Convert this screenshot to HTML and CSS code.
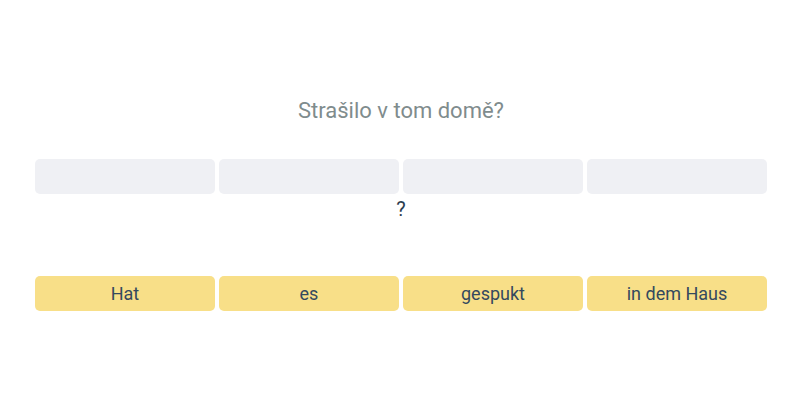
FILE: index.html
```html
<!DOCTYPE html>
<html lang="en">

<head>
    <meta charset="UTF-8">
    <meta name="viewport" content="width=device-width, initial-scale=1.0">
    <title>Sentence Builder</title>
    <link rel="stylesheet" href="styles.css">
</head>

<body>
    <div class="exercise">
        <h2 class="prompt">Strašilo v tom domě?</h2>

        <div class="answer">
            <div class="slot"></div>
            <div class="slot"></div>
            <div class="slot"></div>
            <div class="slot"></div>
        </div>
        <div class="punct">?</div>

        <div class="bank">
            <button class="chip">Hat</button>
            <button class="chip">es</button>
            <button class="chip">gespukt</button>
            <button class="chip">in dem Haus</button>
        </div>
    </div>
</body>

</html>
```

FILE: styles.css
```css
body {
    font-family: Roboto, 'Liberation Sans', sans-serif;
    margin: 0;
    padding: 0;
    background-color: #fff;
}

.exercise {
    padding: 97px 33px 0 35px;
}

.prompt {
    margin: 0;
    font-size: 22px;
    font-weight: 400;
    line-height: 28px;
    color: #7f8c8d;
    text-align: center;
}

.answer {
    display: grid;
    grid-template-columns: repeat(4, 1fr);
    gap: 4px;
    margin-top: 34px;
}

.slot {
    height: 35px;
    background-color: #eff0f4;
    border-radius: 5px;
}

.punct {
    margin-top: 3px;
    font-size: 20px;
    line-height: 24px;
    color: #2c3e50;
    text-align: center;
}

.bank {
    display: grid;
    grid-template-columns: repeat(4, 1fr);
    gap: 4px;
    margin-top: 55px;
}

.chip {
    height: 35px;
    padding: 0;
    border: none;
    border-radius: 5px;
    background-color: #f8df88;
    color: #34495e;
    font-family: inherit;
    font-size: 18px;
    cursor: pointer;
}
```
